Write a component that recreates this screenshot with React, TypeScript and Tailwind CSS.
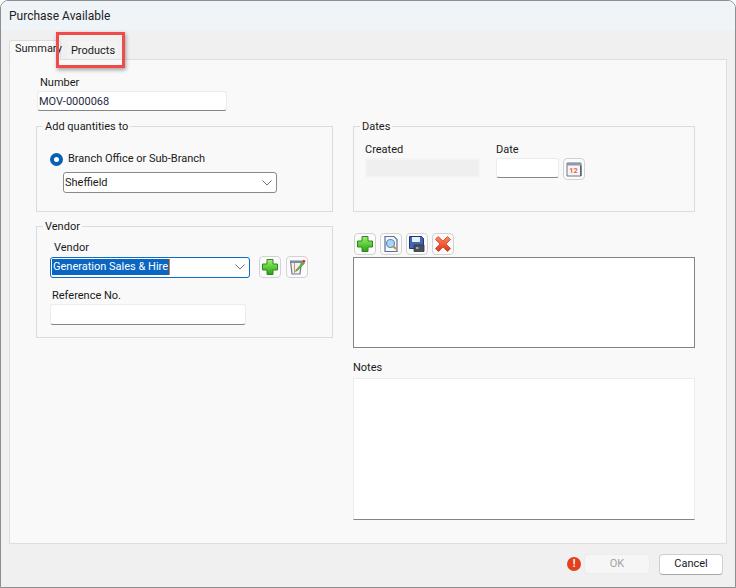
const font = { fontFamily: 'Roboto, sans-serif' };

function PlusIcon() {
  return (
    <svg width="18" height="18" viewBox="0 0 18 18">
      <defs>
        <linearGradient id="plusFill" x1="0" y1="0" x2="0" y2="1">
          <stop offset="0" stopColor="#a6ec7a" />
          <stop offset="0.5" stopColor="#5fce3a" />
          <stop offset="1" stopColor="#2f9e1c" />
        </linearGradient>
      </defs>
      <path d="M6 1.500h6v4.500h4.500v6H12v4.500H6V12H1.500V6H6z" fill="url(#plusFill)" stroke="#2c8a1c" strokeWidth="1" strokeLinejoin="round" />
    </svg>
  );
}

function EditIcon() {
  return (
    <svg width="18" height="18" viewBox="0 0 18 18">
      <path d="M2.500 3h11l-1.500 13H4z" fill="#f4f1ee" stroke="#6d7a96" strokeWidth="1.200" />
      <path d="M2.500 3h11v2h-11z" fill="#7f8ba6" />
      <path d="M6.500 5v10" stroke="#e2866e" strokeWidth="1" />
      <path d="M8 12l7-8 1.500 1.500-7 7-2 1z" fill="#5dbb3a" stroke="#3c8a24" strokeWidth="0.500" />
      <circle cx="15.800" cy="3.200" r="1.500" fill="#d9352a" />
    </svg>
  );
}

function PreviewIcon() {
  return (
    <svg width="18" height="18" viewBox="0 0 18 18">
      <path d="M3 1.500h9l3 3v12H3z" fill="#f6f7fb" stroke="#5c6f9c" strokeWidth="1.200" />
      <circle cx="8.500" cy="8.500" r="4" fill="#a7d6f2" stroke="#5f8fb8" strokeWidth="1.200" />
      <path d="M11.500 11.500l2.500 2.500" stroke="#e08a2c" strokeWidth="2" />
    </svg>
  );
}

function SaveIcon() {
  return (
    <svg width="18" height="18" viewBox="0 0 18 18">
      <path d="M1.500 1.500h12l2 2v10h-14z" fill="#3f66b8" stroke="#21386f" strokeWidth="1" />
      <path d="M4 2h8v5H4z" fill="#e9eef8" />
      <path d="M6 10h10v6.500H6z" fill="#4a4f58" stroke="#30343a" strokeWidth="0.800" />
      <path d="M8 13h2.500" stroke="#ffffff" strokeWidth="1.200" />
    </svg>
  );
}

function DeleteIcon() {
  return (
    <svg width="18" height="18" viewBox="0 0 18 18">
      <defs>
        <linearGradient id="xFill" x1="0" y1="0" x2="0" y2="1">
          <stop offset="0" stopColor="#ff8a5c" />
          <stop offset="1" stopColor="#e0301a" />
        </linearGradient>
      </defs>
      <path d="M4 1.500L9 6l4.500-4.500 3 3L12 9l4.500 4.500-3 3L9 12l-4.500 4.500-3-3L6 9 1.500 4.500z" fill="url(#xFill)" stroke="#c9401f" strokeWidth="0.800" strokeLinejoin="round" />
    </svg>
  );
}

function CalendarIcon() {
  return (
    <svg width="16" height="15" viewBox="0 0 16 15">
      <path d="M1 1h14v13H1z" fill="#f4f6fb" stroke="#6a7488" strokeWidth="1" />
      <path d="M1 1h14v2.500H1z" fill="#8d99b3" />
      <path d="M14 3.500h1.500V14H14z" fill="#59606e" />
      <text x="7.500" y="10.500" textAnchor="middle" fontSize="7.500" fontWeight="700" fill="#f0661d" style={font}>12</text>
    </svg>
  );
}

function IconButton({ children, className = '' }: { children: React.ReactNode; className?: string }) {
  return (
    <button className={`flex h-[22px] w-[22px] items-center justify-center rounded-[4px] border border-[#d2d2d2] bg-[#fbfbfb] ${className}`}>
      {children}
    </button>
  );
}

function Group({ title, className = '', children }: { title: string; className?: string; children: React.ReactNode }) {
  return (
    <fieldset className={`relative border border-[#dcdcdc] ${className}`}>
      <span className="absolute -top-[8px] left-[6px] bg-[#f9f9f9] px-[2px] leading-[16px]">{title}</span>
      {children}
    </fieldset>
  );
}

function Chevron() {
  return (
    <svg width="10" height="6" viewBox="0 0 10 6" className="shrink-0">
      <path d="M0.500 0.500L5 5l4.500-4.500" fill="none" stroke="#707070" strokeWidth="1" />
    </svg>
  );
}

function TextInput({ className = '', children }: { className?: string; children?: React.ReactNode }) {
  return (
    <div className={`flex items-center rounded-[3px] border border-[#ececec] border-b-[#868686] bg-white px-px pt-px ${className}`}>
      {children}
    </div>
  );
}

export default function App() {
  return (
    <div className="flex h-[588px] w-[736px] flex-col overflow-hidden rounded-t-[8px] border border-[#8e8e8e] bg-[#f0f0f0] text-[11px] leading-[16px] text-[#1a1a1a]" style={font}>
      <div className="flex h-[29px] shrink-0 items-center bg-[#eff4f9] pl-[8px] pt-[1px] text-[12px] text-[#222]">Purchase Available</div>

      <div className="relative flex flex-1 flex-col px-[8px]">
        {/* tabs */}
        <div className="relative z-10 flex h-[29px] items-end">
          <div className="mb-[-1px] flex h-[20px] w-[52px] items-center rounded-t-[3px] border border-b-0 border-[#dcdcdc] bg-[#f9f9f9] pb-[3px] pl-[5px]">Summary</div>
          <div className="ml-[6px] flex h-[18px] w-[51px] items-center justify-center bg-[#f3f3f3] pl-[1px] pt-px">Products</div>
        </div>

        <div className="grid h-[485px] grid-cols-[297px_342px] gap-x-[20px] border border-[#dedede] bg-[#f9f9f9] pl-[26px] pt-[14px]">
          {/* left column */}
          <div className="flex flex-col">
            <label className="ml-[4px] h-[17px] pt-px">Number</label>
            <TextInput className="ml-px h-[20px] w-[190px] text-[#1f2a44]">MOV-0000068</TextInput>

            <Group title="Add quantities to" className="mt-[15px] h-[86px] pl-[13px] pt-[24px]">
              <div className="flex items-center gap-[5px]">
                <span className="flex h-[13px] w-[13px] items-center justify-center rounded-full bg-[#0a5fb4]">
                  <span className="h-[5px] w-[5px] rounded-full bg-white" />
                </span>
                <span>Branch Office or Sub-Branch</span>
              </div>
              <div className="ml-[13px] mt-[5px] flex h-[21px] w-[214px] items-center justify-between rounded-[3px] border border-[#8a8a8a] bg-white pl-px pr-[4px]">
                <span>Sheffield</span>
                <Chevron />
              </div>
            </Group>

            <Group title="Vendor" className="mt-[14px] h-[112px] pl-[13px] pt-[13px]">
              <label className="ml-[4px] block h-[16px]">Vendor</label>
              <div className="flex items-center">
                <div className="flex h-[21px] w-[200px] items-center justify-between rounded-[3px] border border-[#0a6cc4] bg-white pl-px pr-[4px]">
                  <span className="border-r border-[#e07b1f] bg-[#0a66c2] px-px text-white">Generation Sales &amp; Hire</span>
                  <Chevron />
                </div>
                <IconButton className="ml-[9px]"><PlusIcon /></IconButton>
                <IconButton className="ml-[5px]"><EditIcon /></IconButton>
              </div>
              <label className="ml-[2px] mt-[9px] block h-[17px] pt-px">Reference No.</label>
              <TextInput className="h-[21px] w-[196px]" />
            </Group>
          </div>

          {/* right column */}
          <div className="flex flex-col">
            <div className="h-[52px] shrink-0" />
            <Group title="Dates" className="flex h-[86px] gap-[16px] pl-[11px] pt-[14px]">
              <div>
                <label className="block h-[17px] pt-px">Created</label>
                <div className="h-[20px] w-[115px] rounded-[2px] border-2 border-[#f4f4f4] bg-[#efefef]" />
              </div>
              <div>
                <label className="block h-[17px] pt-px">Date</label>
                <div className="flex items-start gap-[4px]">
                  <TextInput className="h-[20px] w-[63px]" />
                  <IconButton className="h-[18px] w-[21px]"><CalendarIcon /></IconButton>
                </div>
              </div>
            </Group>

            <div className="mt-[21px] flex gap-[4px] pl-px">
              <IconButton><PlusIcon /></IconButton>
              <IconButton><PreviewIcon /></IconButton>
              <IconButton><SaveIcon /></IconButton>
              <IconButton><DeleteIcon /></IconButton>
            </div>
            <div className="mt-[2px] h-[91px] shrink-0 border border-[#848484] bg-white" />
            <label className="mt-[11px] block h-[19px] pt-px">Notes</label>
            <div className="h-[142px] shrink-0 border border-[#ececec] border-b-[#848484] bg-white" />
          </div>
        </div>

        {/* footer */}
        <div className="flex flex-1 items-center justify-end gap-[4px] pb-[3px] pr-[4px]">
          <span className="flex h-[14px] w-[14px] items-center justify-center rounded-full bg-[#e2401f] text-[10px] font-bold leading-none text-white">!</span>
          <button className="ml-[-1px] h-[20px] w-[66px] rounded-[4px] border border-[#ececec] bg-[#f6f6f6] text-[#a2a2a2]">OK</button>
          <button className="ml-[5px] h-[21px] w-[64px] rounded-[4px] border border-[#cfcfcf] border-b-[#a8a8a8] bg-white">Cancel</button>
        </div>

        {/* red annotation round the Products tab */}
        <div className="pointer-events-none absolute left-[55px] top-[2px] z-20 h-[36px] w-[69px] border-[3px] border-[#f04a4a] shadow-[1px_2px_4px_rgba(0,0,0,0.35)]" />
      </div>
    </div>
  );
}
